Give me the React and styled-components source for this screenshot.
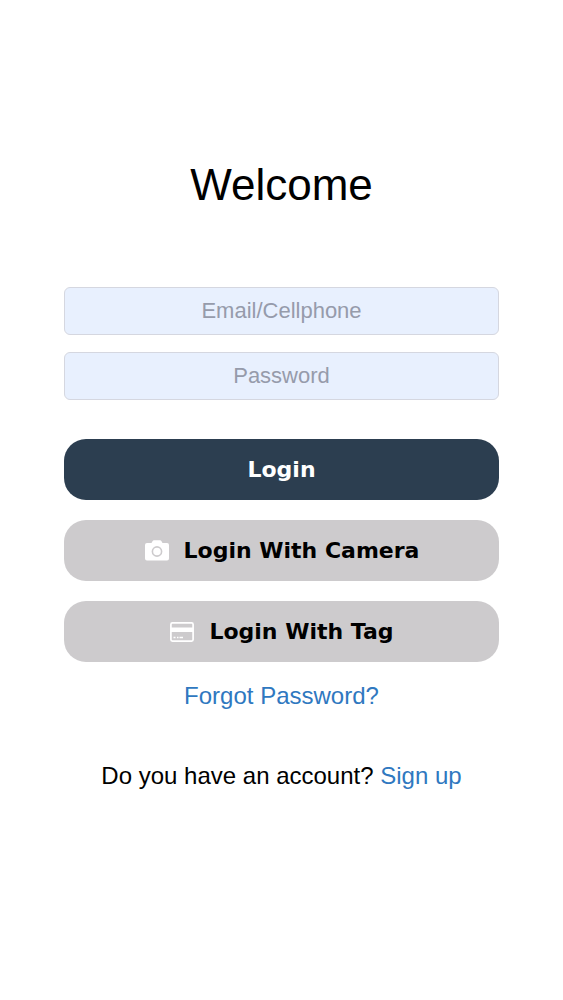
import React from 'react'
import { useState } from "react";
import styled, { createGlobalStyle } from "styled-components"

const GlobalStyle=createGlobalStyle`
    *{
        box-sizing:border-box;
    }
    body{
        margin:0;
        background-color:white;
        color:black;
        font-family:"Liberation Sans", Arial, sans-serif;
    }
`

const Container=styled.main`
    min-height:100vh;
    padding:160px 64px;
    display:flex;
    flex-direction:column;
    align-items:center;
`

const Title=styled.h1`
    margin:0px 0px 77px;
    font-size:44px;
    line-height:50px;
    font-weight:400;
`

const Form=styled.form`
    width:100%;
    display:flex;
    flex-direction:column;
`

const Fields=styled.div`
    display:flex;
    flex-direction:column;
    gap:17px;
    margin-bottom:39px;
`

const Input=styled.input`
    width:100%;
    height:48px;
    padding:0px 16px;
    border:1px solid #d5d7e0;
    border-radius:6px;
    background-color:#e8f0fe;
    font-family:inherit;
    font-size:22px;
    text-align:center;
    &::placeholder{
        color:#969bab;
        opacity:1;
    }
`

const Buttons=styled.div`
    display:flex;
    flex-direction:column;
    gap:20px;
    margin-bottom:20px;
`

const Button=styled.button`
    width:100%;
    height:61px;
    display:flex;
    align-items:center;
    justify-content:center;
    gap:14px;
    border:none;
    border-radius:22px;
    background-color:${props => props.$primary ? "#2c3e50" : "#cdcbcd"};
    color:${props => props.$primary ? "white" : "black"};
    font-family:"DejaVu Sans", Verdana, sans-serif;
    font-size:22px;
    font-weight:700;
    cursor:pointer;
`

const Icon=styled.svg`
    width:26px;
    height:26px;
    flex:none;
`

const Text=styled.p`
    margin:0px 0px 52px;
    font-size:24px;
    line-height:28px;
    text-align:center;
`

const Link=styled.a`
    color:#2f78c0;
    text-decoration:none;
`

const CameraIcon = () => (
    <Icon viewBox="0 0 26 26" aria-hidden="true">
        <path fill="white" d="M3 5h4.500l1-1.800q.5-.9 1.500-.9h6q1 0 1.500.9l1 1.800H23q2 0 2 2v13.500q0 2-2 2H3q-2 0-2-2V7q0-2 2-2z" />
        <circle cx="13" cy="13.500" r="4.600" fill="none" stroke="#cdcbcd" strokeWidth="1.600" />
    </Icon>
)

const CardIcon = () => (
    <Icon viewBox="0 0 26 26" aria-hidden="true">
        <rect x="1.900" y="3.900" width="22.200" height="18.200" rx="1.500" fill="none" stroke="white" strokeWidth="1.700" />
        <path fill="white" d="M2 8.500h22v4.500H2z" />
        <path stroke="white" strokeWidth="1.400" d="M4.500 18.500h2M8 18.500h1.500M10.500 18.500h3.500" />
    </Icon>
)

const Login = () => {
    const [email, setEmail] = useState("");
    const [password, setPassword] = useState("");

    return (
        <>
            <GlobalStyle />
            <Container>
                <Title>Welcome</Title>
                <Form onSubmit={(event) => event.preventDefault()}>
                    <Fields>
                        <Input
                            name="email"
                            aria-label="Email/Cellphone"
                            placeholder="Email/Cellphone"
                            value={email}
                            onChange={(event) => setEmail(event.target.value)}
                        />
                        <Input
                            name="password"
                            type="password"
                            aria-label="Password"
                            placeholder="Password"
                            value={password}
                            onChange={(event) => setPassword(event.target.value)}
                        />
                    </Fields>
                    <Buttons>
                        <Button $primary type="submit">Login</Button>
                        <Button type="button"><CameraIcon />Login With Camera</Button>
                        <Button type="button"><CardIcon />Login With Tag</Button>
                    </Buttons>
                </Form>
                <Text><Link href="#forgot">Forgot Password?</Link></Text>
                <Text>Do you have an account? <Link href="#signup">Sign up</Link></Text>
            </Container>
        </>
    )
}

export default Login
